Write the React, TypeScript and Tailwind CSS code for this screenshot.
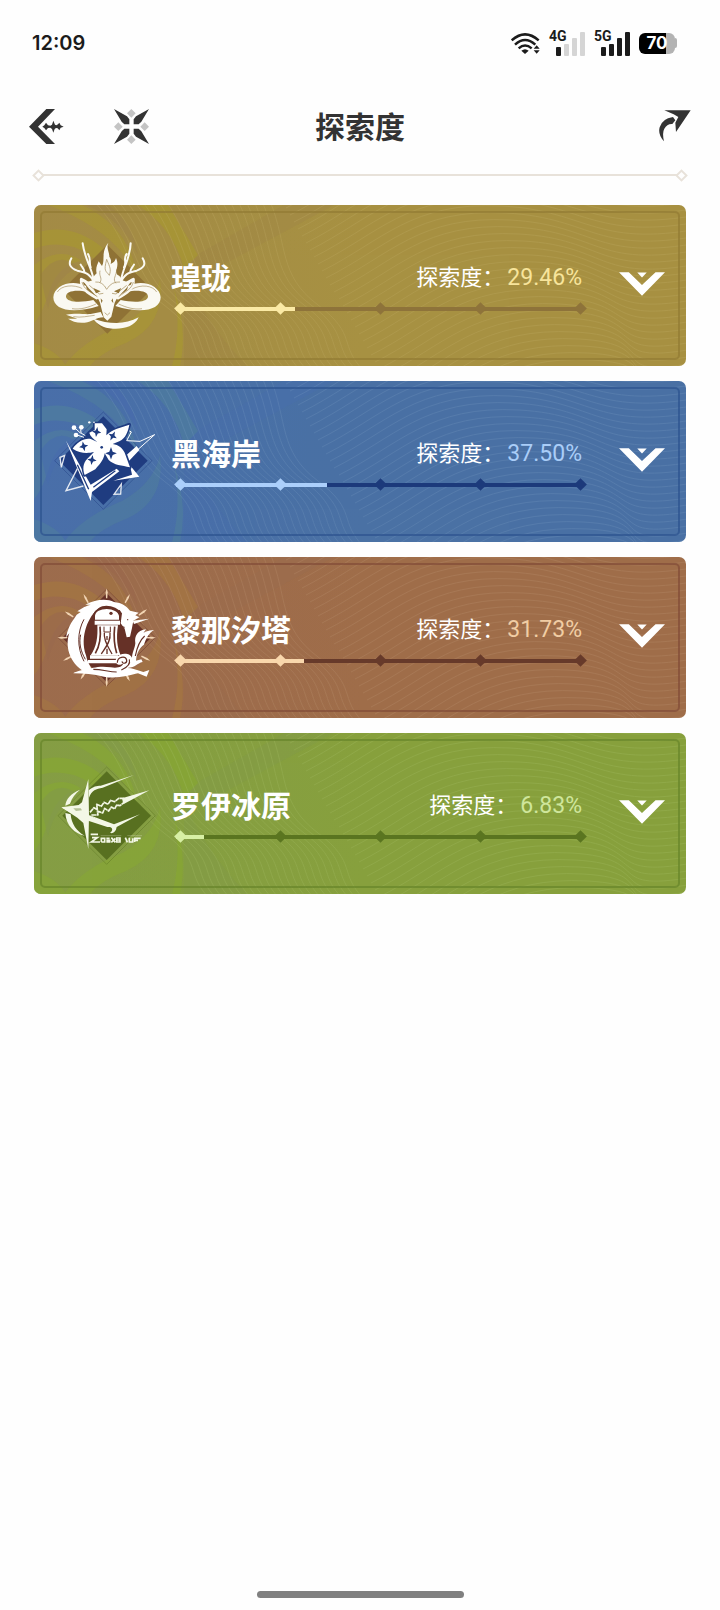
import React, { useId } from "react";

type Theme = {
  card: string;
  frame: string;
  track: string;
  fill: string;
  value: string;
  swirlLight: string;
  swirlDark: string;
  line: string;
};

type Region = {
  id: string;
  name: string;
  percent: number;
  theme: Theme;
  Emblem: () => React.JSX.Element;
};

/* ---------- status bar ---------- */

function Wifi() {
  return (
    <svg className="h-[22px] w-[30px]" viewBox="0 0 90 66" fill="none" aria-hidden="true">
      <g stroke="#1b1b1b" strokeWidth="7.5">
        <path d="M2 25Q42-11 83 25" />
        <path d="M12 38Q42 10 73 38" />
        <path d="M23 49Q42 32 62 49" />
      </g>
      <path d="M31 56Q42 47 53 56L42 66Z" fill="#1b1b1b" />
      <path d="M77 40l9 10H68ZM77 65l9-10H68Z" fill="#1b1b1b" />
    </svg>
  );
}

function Signal({ label, level }: { label: string; level: number }) {
  const bars = ["h-[9px]", "h-3", "h-[18px]", "h-6"];
  return (
    <div className="relative flex h-[26px] w-9 items-end justify-end gap-[3px]">
      <span className="absolute top-0 left-0 font-['Roboto',sans-serif] text-[14px] leading-3 font-bold text-[#1b1b1b]">
        {label}
      </span>
      {bars.map((h, i) => (
        <span key={h} className={`w-[5px] rounded-[1px] ${h} ${i < level ? "bg-[#1b1b1b]" : "bg-[#d5d5d5]"}`} />
      ))}
    </div>
  );
}

function Battery() {
  return (
    <div className="flex items-center">
      <div className="flex h-[21px] w-9 items-center justify-center rounded-[6px] bg-linear-to-r from-black from-75% to-[#b3b3b3] to-75% font-['Inter',sans-serif] text-[17px] leading-none font-bold text-white">
        70
      </div>
      <span className="h-[10px] w-[2px] rounded-r-full bg-[#b3b3b3]" />
    </div>
  );
}

function StatusBar() {
  return (
    <div className="flex h-[86px] items-center justify-between pr-[43px] pl-8">
      <span className="font-['Inter',sans-serif] text-[20px] font-semibold text-[#1b1b1b]">12:09</span>
      <div className="flex items-center">
        <Wifi />
        <div className="ml-2">
          <Signal label="4G" level={1} />
        </div>
        <div className="ml-[9px]">
          <Signal label="5G" level={4} />
        </div>
        <div className="ml-[9px]">
          <Battery />
        </div>
      </div>
    </div>
  );
}

/* ---------- header ---------- */

function BackIcon() {
  return (
    <svg className="h-[35px] w-[35px]" viewBox="0 0 105 105" fill="#333" aria-hidden="true">
      <path d="M52 0H78L27 53L78 105H52L0 53Z" />
      <path d="M40 53L46 49L51 41L57 49L64 50L69 47L73 35L78 47L82 49L87 46L91 41L95 49L104 53L95 56L91 64L86 58L81 57L77 60L73 71L69 60L64 56L57 57L51 64L46 57Z" />
    </svg>
  );
}

function StarIcon() {
  return (
    <svg className="h-[35px] w-[35px]" viewBox="0 0 105 105" aria-hidden="true">
      <path
        fill="#c4c4c4"
        d="M52 0L65 13L52 26L39 13ZM52 79L65 92L52 105L39 92ZM13 40L26 53L13 66L0 53ZM92 40L105 53L92 66L79 53Z"
      />
      <path
        fill="#333"
        d="M0 0L39 22L46 31V46H31L23 38ZM105 0L66 22L59 31V46H74L82 38ZM0 105L39 83L46 74V59H31L23 67ZM105 105L66 83L59 74V59H74L82 67Z"
      />
    </svg>
  );
}

function ShareIcon() {
  return (
    <svg className="h-8 w-8" viewBox="0 0 96 96" fill="#333" aria-hidden="true">
      <path d="M16 1H95L51 66L49 38L58 21L44 13Z" />
      <path d="M42 21L49 31L40 42Q24 41 16 56Q9 68 15 94Q-4 74 2 52Q9 26 42 21Z" />
    </svg>
  );
}

function Header() {
  return (
    <header className="grid h-20 grid-cols-[1fr_auto_1fr] items-center px-[29px]">
      <div className="flex items-center gap-[50px]">
        <button type="button" aria-label="返回">
          <BackIcon />
        </button>
        <button type="button" aria-label="首页">
          <StarIcon />
        </button>
      </div>
      <h1 className="pb-0.5 text-[30px] leading-10 font-bold text-[#333]">探索度</h1>
      <button type="button" aria-label="分享" className="justify-self-end">
        <ShareIcon />
      </button>
    </header>
  );
}

function Divider() {
  return (
    <div className="flex h-[18px] items-center px-[34px]">
      <span className="size-[9px] rotate-45 border-2 border-[#e8e2da]" />
      <span className="h-0.5 flex-1 bg-[#e8e2da]" />
      <span className="size-[9px] rotate-45 border-2 border-[#e8e2da]" />
    </div>
  );
}

/* ---------- region emblems ---------- */

function Frame({ color, cx, cy }: { color: string; cx: number; cy: number }) {
  return (
    <g transform={`translate(${cx} ${cy})`}>
      <path d="M0-146L146 0L0 146L-146 0Z" fill="none" stroke={color} strokeWidth="2.5" opacity=".5" />
      <path d="M0-133L133 0L0 133L-133 0Z" fill={color} />
    </g>
  );
}

function DragonEmblem() {
  return (
    <svg className="h-[120px] w-[130px]" viewBox="0 -15 390 360" aria-hidden="true">
      <path d="M202 44L335 178L202 311L69 178Z" fill="#8f7235" />
      {/* coils */}
      <g fill="#faf9f2">
        <path d="M138 168C92 146 42 168 40 202C40 242 100 252 176 228L160 210C124 218 80 218 78 200C78 184 106 178 142 186Z" />
        <path d="M264 168C310 146 360 168 362 202C362 242 302 252 226 228L242 210C278 218 322 218 324 200C324 184 296 178 260 186Z" />
        <path d="M78 254C112 248 132 254 152 252L182 246L190 262C168 262 158 276 134 278C112 280 96 274 84 266L112 266Z" />
        <path d="M160 266C206 282 254 286 296 262C284 290 250 298 218 296C190 294 170 282 160 266Z" />
      </g>
      <g fill="none" stroke="#8f7235" strokeWidth="2.2" opacity=".7">
        <path d="M52 186C64 166 100 162 128 176M350 186C338 166 304 162 274 178M100 260C124 264 144 258 164 256M96 236C120 240 146 232 168 222M306 236C282 240 258 232 236 222" />
      </g>
      {/* antlers */}
      <g fill="none" stroke="#faf9f2" strokeLinecap="round" strokeLinejoin="round">
        <path d="M168 168C152 130 136 126 112 122C90 114 84 102 94 85M160 146C154 112 134 86 128 40M152 112C146 96 154 88 144 72M134 128C132 114 126 112 122 104M236 168C252 130 268 126 290 122C314 112 318 102 308 85M244 146C250 112 270 86 272 40M252 112C262 96 248 86 260 72M270 128C272 114 278 112 282 104" strokeWidth="6" />
        <path d="M176 180C150 166 138 154 124 148C122 176 146 190 170 204M228 180C252 166 266 154 280 148C282 176 258 190 234 204" strokeWidth="9" />
      </g>
      {/* mane and head */}
      <path
        fill="#faf9f2"
        d="M205 38C198 54 208 66 208 80C214 88 214 94 212 102C222 98 226 92 228 84C240 110 222 122 232 134C240 138 244 142 244 150L270 158C256 184 234 194 224 218L214 260L202 272L191 262L180 218C172 194 150 184 134 158L160 150C158 140 164 136 170 130C166 114 172 104 176 94L186 108C196 92 182 66 205 38Z"
      />
      <g fill="none" stroke="#8f7235" strokeWidth="2.2" opacity=".75">
        <path d="M200 88C210 112 214 118 208 136C198 122 190 126 200 88M180 122C176 140 188 142 180 158M230 118C230 138 216 146 228 160M166 156Q188 154 200 178Q214 154 240 156" />
        <path d="M148 166L178 192L190 190M260 166L228 192L216 190M126 156C132 178 146 182 172 200M280 156C274 178 260 182 236 200M194 248L202 255L210 248" />
      </g>
      <path d="M160 174L182 184L168 190ZM244 174L222 184L236 190ZM182 205L188 212L184 220ZM218 205L214 212L220 220Z" fill="#8f7235" />
    </svg>
  );
}

function FlowerEmblem() {
  const sparkle = "M0-15L4-4L14 0L4 4L0 15L-4 4L-14 0L-4-4Z";
  return (
    <svg className="h-[120px] w-[130px]" viewBox="0 3 390 360" aria-hidden="true">
      <Frame color="#1f3c80" cx={190} cy={182} />
      <g fill="none" stroke="#fff" strokeWidth="4">
        <path d="M130 258L78 272L112 206M60 172L74 166L64 202ZM222 283L244 252L242 282Z" opacity=".85" />
        <path d="M264 90L274 96L260 122L300 124L344 104L272 168" strokeWidth="3" />
      </g>
      {/* bands below the flower */}
      <path d="M78 122L144 240L152 254L230 206L238 214L156 276L152 303Z" fill="#fff" />
      <path d="M252 172L290 138L298 150L262 188ZM270 196L298 230L220 242L276 224Z" fill="#fff" />
      <path d="M112 194L146 268M160 262L226 212" fill="none" stroke="#1f3c80" strokeWidth="4" />
      {/* petals */}
      <path
        fill="#fff"
        stroke="#1f3c80"
        strokeWidth="10"
        strokeLinejoin="round"
        paintOrder="stroke"
        d="M164 70L186 70L200 88L199 106C216 88 244 82 268 74C264 94 258 114 238 124L218 132C236 134 248 146 254 158L270 202C246 196 222 196 206 180L194 160C192 176 184 188 166 208L134 225C128 208 128 190 142 176L162 156C146 160 120 162 98 146C112 126 136 112 154 118L172 126C160 116 150 108 148 98L164 90Z"
      />
      <g fill="#1f3c80">
        <path d={sparkle} transform="translate(170 96) rotate(8)" />
        <path d={sparkle} transform="translate(218 108) rotate(28)" />
        <path d={sparkle} transform="translate(131 139) rotate(-12)" />
        <path d={sparkle} transform="translate(213 160) scale(1.25)" />
        <path d={sparkle} transform="translate(156 180) rotate(8)" />
        <circle cx="185" cy="142" r="4" />
      </g>
      {/* buds */}
      <g fill="#fff">
        <circle cx="102" cy="83" r="7" />
        <circle cx="124" cy="82" r="7" />
        <circle cx="108" cy="105" r="7" />
        <circle cx="148" cy="67" r="3.5" />
        <circle cx="162" cy="67" r="2.5" />
      </g>
      <path d="M108 87L122 100M122 88L123 99L136 107M114 106L132 112" stroke="#fff" strokeWidth="3" fill="none" />
    </svg>
  );
}

function LighthouseEmblem() {
  const rays = [0, 28, 55, 90, 118, 152, 180, 212, 242, 270, 302, 332];
  return (
    <svg className="h-[120px] w-[130px]" viewBox="0 -9 390 360" aria-hidden="true">
      <Frame color="#663127" cx={200} cy={173} />
      <g fill="#f2d5b4">
        {rays.map((a) => (
          <path key={a} d="M0-148L3-136L2-118H-2L-3-136Z" transform={`translate(200 173) rotate(${a})`} />
        ))}
      </g>
      {/* unicorn sweeping round the tower */}
      <path
        fill="#fff"
        d="M142 280C94 258 72 204 88 160L78 172C86 132 102 118 110 104L122 96L112 94C128 82 138 78 152 74L136 74C166 58 200 54 222 66L234 68C252 72 262 82 270 92L296 98L286 106L298 112L280 122L276 144L270 170L260 172L254 146L242 130L246 100C232 80 196 70 176 84C146 108 118 168 138 226C142 246 150 256 154 266Z"
      />
      <path d="M278 122L328 116L282 132Z" fill="#fff" />
      <path d="M132 118C112 154 110 202 132 244M122 164C116 188 122 214 136 238M242 98L238 90M246 140L254 142" fill="none" stroke="#663127" strokeWidth="3" />
      <circle cx="263" cy="119" r="2" fill="#663127" />
      {/* tower */}
      <path d="M162 122V108C164 76 236 76 240 108V122Z" fill="#fff" stroke="#663127" strokeWidth="6" />
      <circle cx="213" cy="100" r="5" fill="#663127" />
      <path d="M164 122H240V134H164ZM150 226H234V236H150ZM144 240H232V250H144Z" fill="#fff" />
      <path d="M172 136H234C228 176 232 202 242 226H152C170 200 174 170 172 136Z" fill="#fff" />
      <g fill="none" stroke="#663127">
        <path d="M180 140C184 176 178 200 166 220M224 140C220 176 224 200 230 220" strokeWidth="5" />
        <path d="M193 158C190 184 208 206 216 222M210 158C214 184 194 206 184 222M201 168V180M201 206V222" strokeWidth="4" />
        <path d="M192 140V156H211V140" strokeWidth="3" />
      </g>
      {/* waves and tail */}
      <path
        fill="#fff"
        d="M342 150C324 152 310 154 306 166L318 148C294 150 282 168 286 190C284 208 276 218 276 234C272 218 238 216 228 236C224 252 238 260 250 250C248 260 234 266 212 262C174 256 158 266 132 268C116 274 104 276 100 280C132 280 160 282 192 290C226 298 270 286 294 280L320 290L328 270L310 276C290 270 276 264 262 264C288 262 290 250 308 246L304 238L288 242C290 214 302 202 312 194C318 176 326 160 342 150Z"
      />
      <path d="M232 248C232 230 256 226 260 240C262 250 248 254 246 244M160 268C188 268 206 276 230 276M268 238C272 252 262 262 244 270M314 168C296 184 290 208 286 228" fill="none" stroke="#663127" strokeWidth="3.5" />
    </svg>
  );
}

function BladeEmblem() {
  return (
    <svg className="h-[120px] w-[130px]" viewBox="0 -6 390 360" aria-hidden="true">
      <Frame color="#587020" cx={200} cy={182} />
      <g fill="#f3f7e6">
        {/* crescent */}
        <path d="M120 104C92 116 78 132 76 152L90 146C96 128 106 116 120 104ZM76 174L92 178C94 206 110 230 134 242C104 236 78 212 76 174Z" />
        {/* compass blade */}
        <path d="M145 72L147 180L145 282L130 204L112 188L64 157L116 150L126 142Z" />
        <path d="M146 106C160 94 170 92 182 92L282 60L188 98C168 102 156 104 147 128ZM147 180L222 208L300 178L230 216C228 230 220 236 210 234C218 228 218 222 214 218Z" />
        <path d="M146 180L192 202L226 216L202 216L140 196Z" />
        <path d="M246 130L328 106L250 148Z" />
      </g>
      <path d="M66 158L114 156L146 180L114 184Z" fill="#f3f7e6" />
      <path d="M100 160L122 160L126 166L108 168Z" fill="#587020" opacity=".4" />
      <path
        d="M150 172L162 158L172 164L170 148L184 154L192 142L204 148L212 136L224 140L236 130L254 130M154 180L174 180L172 168L188 174L194 160L206 168L214 156L224 162L230 150L240 152L252 142"
        fill="none"
        stroke="#f3f7e6"
        strokeWidth="5"
        strokeLinejoin="round"
        strokeDasharray="14 1"
      />
      {/* engraved glyph strip */}
      <g fill="none" stroke="#f3f7e6" strokeWidth="5">
        <path d="M152 238H174M156 248H172L154 261H180M184 261V250H194V261H184M199 250H209M199 261H209V256H199M214 248L226 262M226 250L214 262M230 249H240V261H230ZM230 255H240M256 248L262 262M268 248V261H278V250M284 261V250H302M284 256H294" />
        <path d="M182 242H244M262 242H306" strokeWidth="2" opacity=".4" />
      </g>
    </svg>
  );
}

/* ---------- card ---------- */

const steepRows = Array.from({ length: 23 }, (_, i) => i);
const waveRows = Array.from({ length: 46 }, (_, i) => {
  const y = -60 + i * 7;
  const x = Math.round(250 + y * 0.58);
  return `M${x} ${y}C${x + 60} ${y - 30} ${x + 90} ${y - 70} ${x + 180} ${y - 65}S${560} ${y - 20} 680 ${y - 45}`;
});

function CardTexture({ theme }: { theme: Theme }) {
  const shade = useId();
  return (
    <svg
      className="absolute inset-0 size-full"
      viewBox="0 0 652 161"
      preserveAspectRatio="xMinYMid slice"
      fill="none"
      aria-hidden="true"
    >
      <defs>
        <linearGradient id={shade} x1="0" x2="1" y1="0" y2="0">
          <stop offset="0" stopColor={theme.swirlDark} stopOpacity=".5" />
          <stop offset=".5" stopColor={theme.swirlDark} stopOpacity=".3" />
          <stop offset="1" stopColor={theme.swirlDark} stopOpacity="0" />
        </linearGradient>
      </defs>
      <path d="M0 0H330V161H0Z" fill={`url(#${shade})`} />
      <path d="M152 56L250 0H300L170 70ZM150 70Q180 130 214 161H150Z" fill={theme.swirlDark} opacity=".35" />
      <g fill={theme.swirlLight}>
        <path d="M0 28Q38 16 70 44Q92 70 88 104Q74 54 40 42Q18 36 0 44Z" opacity=".6" />
        <path d="M0 60Q26 40 48 56Q26 58 16 84Q8 110 0 118Z" opacity=".55" />
        <path d="M14 0H48Q96 22 104 74Q84 26 14 0Z" opacity=".5" />
        <path d="M104 0H134Q152 30 164 50L150 64Q140 24 104 0Z" opacity=".6" />
        <path d="M30 161Q48 136 88 120Q120 102 126 74Q132 120 92 138Q66 148 56 161Z" opacity=".5" />
        <path d="M138 161Q148 124 140 84Q154 124 146 161Z" opacity=".6" />
        <path d="M0 138Q24 146 32 161H0Z" opacity=".5" />
      </g>
      <path d="M6 70Q24 44 44 62Q20 74 14 104ZM52 0Q88 14 104 50Q98 16 74 0Z" fill={theme.swirlDark} opacity=".6" />
      <g stroke={theme.line} strokeWidth="1" opacity=".25">
        {steepRows.map((i) => (
          <path
            key={i}
            d={`M${60 + i * 8} -4C${100 + i * 7} 40 ${90 + i * 7} 70 ${130 + i * 7} 100S${150 + i * 7} 140 ${176 + i * 7} 166`}
          />
        ))}
        {waveRows.map((d) => (
          <path key={d} d={d} />
        ))}
      </g>
    </svg>
  );
}

function Progress({ percent, theme, label }: { percent: number; theme: Theme; label: string }) {
  const stops = [0, 25, 50, 75, 100];
  return (
    <div
      role="progressbar"
      aria-label={label}
      aria-valuenow={percent}
      aria-valuemin={0}
      aria-valuemax={100}
      className="relative flex h-[13px] items-center justify-between"
    >
      <div className={`absolute inset-x-1.5 h-1 ${theme.track}`} />
      <div className="absolute right-2 left-0.5 h-1">
        <div className={`h-full ${theme.fill}`} style={{ width: `${percent}%` }} />
      </div>
      {stops.map((s) => (
        <span
          key={s}
          className={`relative mx-0.5 size-[9px] rotate-45 ${percent >= s ? theme.fill : theme.track}`}
        />
      ))}
    </div>
  );
}

function RegionCard({ region }: { region: Region }) {
  const { theme, Emblem } = region;
  return (
    <li className={`relative flex h-[161px] overflow-hidden rounded-[7px] ${theme.card}`}>
      <CardTexture theme={theme} />
      <div className={`pointer-events-none absolute inset-[6px] rounded-[5px] border-2 ${theme.frame}`} />
      <div className="relative mt-5 ml-1.5 shrink-0">
        <Emblem />
      </div>
      <div className="relative flex-1 pt-[49px]">
        <div className="flex h-[44px] items-center justify-between pr-[5px] pl-px">
          <h2 className="text-[30px] leading-none font-bold text-white">{region.name}</h2>
          <p className="flex items-baseline gap-[3px] text-[22px] leading-none text-white">
            探索度：
            <span className={`font-['Roboto',sans-serif] text-[23px] ${theme.value}`}>
              {region.percent.toFixed(2)}%
            </span>
          </p>
        </div>
        <div className="mt-1 ml-1">
          <Progress percent={region.percent} theme={theme} label={region.name} />
        </div>
      </div>
      <button type="button" aria-label={`展开${region.name}`} className="relative mr-[13px] ml-6 self-center px-2 pb-1">
        <svg className="h-6 w-[46px]" viewBox="0 0 136 70" fill="#fff" aria-hidden="true">
          <path d="M0 0H29L68 38L108 0H136L68 70Z" />
          <path d="M54 1H82L68 16Z" />
        </svg>
      </button>
    </li>
  );
}

const regions: Region[] = [
  {
    id: "huanglong",
    name: "瑝珑",
    percent: 29.46,
    Emblem: DragonEmblem,
    theme: {
      card: "bg-[#a79142]",
      frame: "border-[#927a33]/70",
      track: "bg-[#8e733a]",
      fill: "bg-[#fbeaa5]",
      value: "text-[#f7e49b]",
      swirlLight: "#a9992f",
      swirlDark: "#9f8449",
      line: "#c4b06a",
    },
  },
  {
    id: "black-shores",
    name: "黑海岸",
    percent: 37.5,
    Emblem: FlowerEmblem,
    theme: {
      card: "bg-[#4a71a4]",
      frame: "border-[#2c538f]/70",
      track: "bg-[#1c3a7b]",
      fill: "bg-[#abcffb]",
      value: "text-[#a9cdf8]",
      swirlLight: "#50809c",
      swirlDark: "#486cae",
      line: "#7a9dc2",
    },
  },
  {
    id: "rinascita",
    name: "黎那汐塔",
    percent: 31.73,
    Emblem: LighthouseEmblem,
    theme: {
      card: "bg-[#9f6e4a]",
      frame: "border-[#814c37]/70",
      track: "bg-[#673a2a]",
      fill: "bg-[#f9d7ac]",
      value: "text-[#f1cda4]",
      swirlLight: "#a57840",
      swirlDark: "#99694f",
      line: "#c09676",
    },
  },
  {
    id: "roya",
    name: "罗伊冰原",
    percent: 6.83,
    Emblem: BladeEmblem,
    theme: {
      card: "bg-[#87a03d]",
      frame: "border-[#67852a]/70",
      track: "bg-[#5a7520]",
      fill: "bg-[#d8efa5]",
      value: "text-[#cfe69c]",
      swirlLight: "#87a931",
      swirlDark: "#829a4b",
      line: "#aac26c",
    },
  },
];

export default function App() {
  return (
    <div className="flex min-h-screen flex-col bg-[#fefefe] font-['Noto_Sans_CJK_SC',sans-serif]">
      <StatusBar />
      <Header />
      <Divider />
      <main className="px-[34px] pt-[21px]">
        <ul className="flex flex-col gap-[15px]">
          {regions.map((r) => (
            <RegionCard key={r.id} region={r} />
          ))}
        </ul>
      </main>
      <div className="mt-auto flex justify-center pb-3">
        <span className="h-[7px] w-[207px] rounded-full bg-[#808080]" />
      </div>
    </div>
  );
}
